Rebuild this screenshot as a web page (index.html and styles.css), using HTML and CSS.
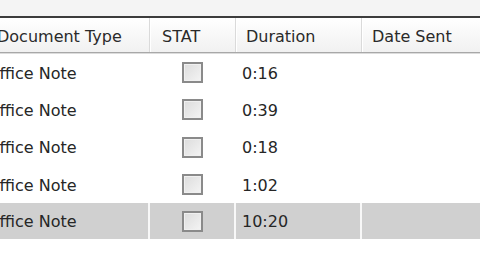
FILE: index.html
```html
<!DOCTYPE html>
<html>
<head>
<meta charset="utf-8">
<link rel="stylesheet" href="styles.css">
</head>
<body>
<div class="top"></div>
<div class="grid">
  <div class="row head">
    <div class="cell c1">Document Type</div>
    <div class="cell c2">STAT</div>
    <div class="cell c3">Duration</div>
    <div class="cell c4">Date Sent</div>
  </div>
  <div class="row">
    <div class="cell c1">Office Note</div>
    <div class="cell c2"><span class="box"></span></div>
    <div class="cell c3">0:16</div>
    <div class="cell c4"></div>
  </div>
  <div class="row">
    <div class="cell c1">Office Note</div>
    <div class="cell c2"><span class="box"></span></div>
    <div class="cell c3">0:39</div>
    <div class="cell c4"></div>
  </div>
  <div class="row">
    <div class="cell c1">Office Note</div>
    <div class="cell c2"><span class="box"></span></div>
    <div class="cell c3">0:18</div>
    <div class="cell c4"></div>
  </div>
  <div class="row">
    <div class="cell c1">Office Note</div>
    <div class="cell c2"><span class="box"></span></div>
    <div class="cell c3">1:02</div>
    <div class="cell c4"></div>
  </div>
  <div class="row sel">
    <div class="cell c1">Office Note</div>
    <div class="cell c2"><span class="box"></span></div>
    <div class="cell c3">10:20</div>
    <div class="cell c4"></div>
  </div>
</div>
</body>
</html>
```
FILE: styles.css
```css
html, body {
  margin: 0;
  padding: 0;
  background: #ffffff;
  overflow: hidden;
  width: 480px;
  height: 270px;
}
body {
  font-family: "DejaVu Sans", Verdana, sans-serif;
  font-size: 16px;
  color: #262626;
}
.top {
  height: 16px;
  background: #f4f4f4;
}
.grid {
  margin-left: -13px;
  width: 540px;
}
.row {
  display: grid;
  grid-template-columns: 163px 86px 126px 165px;
  height: 37.3px;
}
.cell {
  display: flex;
  align-items: center;
  padding-left: 5px;
  box-sizing: border-box;
  white-space: nowrap;
}
.row.head {
  height: 34px;
  border-top: 2px solid #3c3c3c;
  border-bottom: 1px solid #a8a8a8;
  box-shadow: 0 1px 0 #dcdcdc;
  background: linear-gradient(#ffffff, #f1f1f1);
  color: #2a2a2a;
  margin-bottom: 1px;
}
.row.head .cell {
  padding-left: 10px;
  padding-top: 3px;
  border-right: 1px solid #dadada;
  box-shadow: 1px 0 0 #ffffff;
}
.row.head .cell.c1 { padding-left: 10px; }
.row.head .cell.c2 { padding-left: 12px; }
.row.head .cell.c3 { padding-left: 10px; }
.c1 { padding-left: 0; padding-top: 1px; }
.c2 { padding-left: 32px; }
.c3 { padding-left: 6px; padding-top: 1px; }
.box {
  width: 17px;
  height: 17px;
  border: 2px solid #8a8a8a;
  background: linear-gradient(135deg, #dcdcdc, #f4f4f4);
  box-shadow: inset 0 0 0 1px #f0f0f0;
}
.row.sel {
  background: #d0d0d0;
  border-bottom: 1px solid #ffffff;
  box-sizing: border-box;
}
.row.sel .cell {
  border-right: 2px solid #f8f8f8;
}
```
